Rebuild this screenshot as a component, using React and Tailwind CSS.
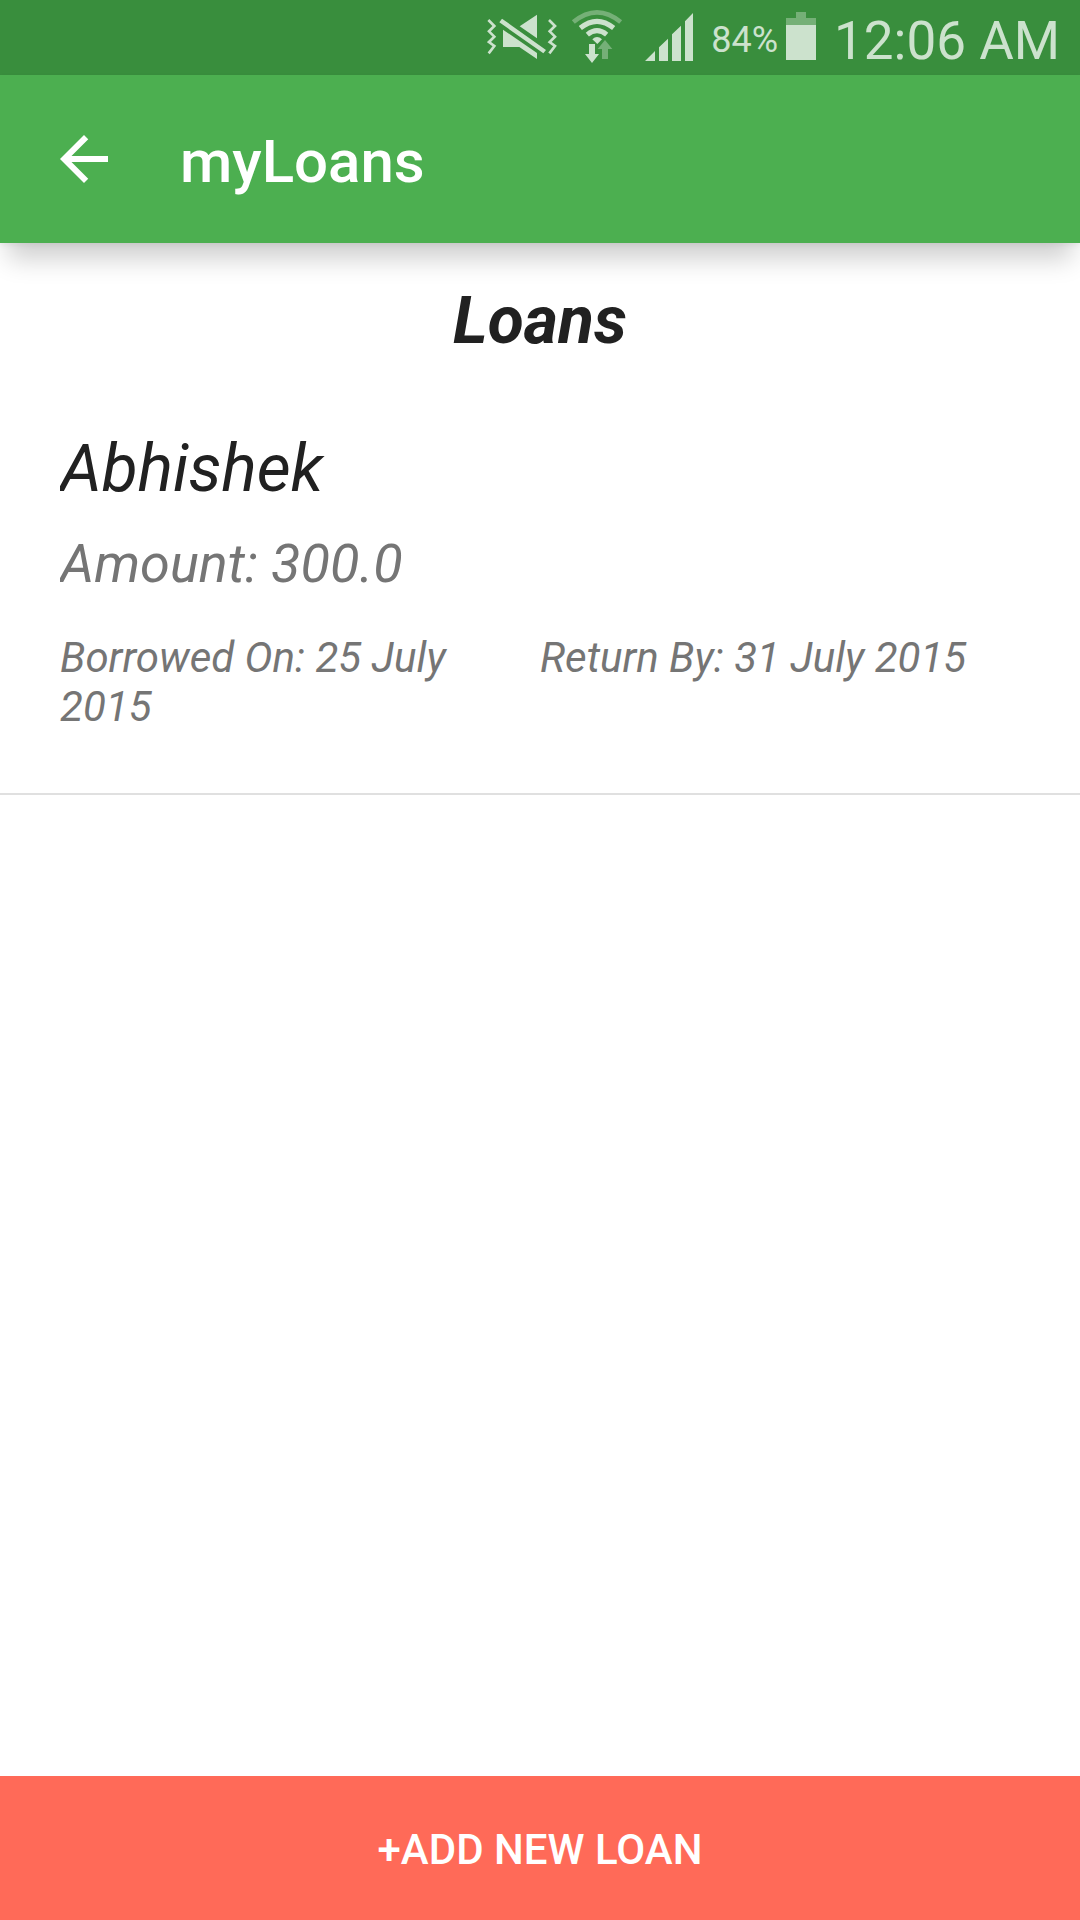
const loans = [
  {
    name: 'Abhishek',
    amount: '300.0',
    borrowed: '25 July 2015',
    due: '31 July 2015',
  },
];

function MutedIcon() {
  return (
    <svg viewBox="48 0 210 225" className="h-[75px] w-[70px]" aria-label="Vibrate">
      <g fill="none" stroke="#cce2cd" strokeWidth="8">
        <path d="M52 60 70 78 54 94 70 110 54 126 70 138 53 160" />
        <path d="M234 60 252 78 236 94 252 110 236 126 252 138 235 160" />
      </g>
      <path fill="#cce2cd" d="M198 44V115L146 79ZM96 89 198 159V177L145 141H96ZM93 56 225 150 217 160 85 67Z" />
    </svg>
  );
}

function WifiIcon() {
  return (
    <svg viewBox="300 0 156 225" className="h-[75px] w-[52px]" aria-label="Wi-Fi">
      <g fill="none" stroke="#cce2cd">
        <path stroke="#75b077" strokeWidth="14" d="M307 66Q378 8 449 66" />
        <path strokeWidth="15" d="M328 84Q378 44 428 84" />
        <path strokeWidth="15" d="M349 104Q378 80 407 104" />
      </g>
      <path fill="#cce2cd" d="M364 118Q378 104 393 118L379 132Z" />
      <path fill="#cce2cd" d="M354 132H372V162H384L363 189 342 162H354Z" />
      <path fill="#75b077" d="M402 120 424 147H411V177H393V147H380Z" />
    </svg>
  );
}

function SignalIcon() {
  return (
    <svg viewBox="522 0 144 225" className="h-[75px] w-12" aria-label="Signal strength">
      <path fill="#cce2cd" d="M552 153V183H522ZM564 142 591 116V183H564ZM603 103 630 77V183H603ZM642 64 666 39V183H642Z" />
    </svg>
  );
}

function BatteryIcon() {
  return (
    <svg viewBox="285 0 90 225" className="h-[75px] w-[30px]" aria-label="Battery">
      <path fill="#75b077" d="M315 36H345V54H375V75H285V54H315Z" />
      <path fill="#cce2cd" d="M285 75H375V180H285Z" />
    </svg>
  );
}

function StatusBar() {
  return (
    <div className="flex h-[75px] items-center justify-end bg-[#398e3d] pr-5 text-[#cce2cd]">
      <MutedIcon />
      <div className="ml-[14px]"><WifiIcon /></div>
      <div className="ml-[22px]"><SignalIcon /></div>
      <span className="ml-[18px] pt-1 text-[36px] leading-[42px]">84%</span>
      <div className="ml-2"><BatteryIcon /></div>
      <span className="ml-[18px] pt-[6px] text-[53px] leading-[64px]">12:06 AM</span>
    </div>
  );
}

function Toolbar() {
  return (
    <header className="flex h-[168px] items-center bg-[#4caf50] pt-[6px] pl-[60px] text-white shadow-[0_24px_24px_-8px_rgba(0,0,0,0.19),0_2px_5px_rgba(0,0,0,0.06)]">
      <button type="button" aria-label="Back" className="pb-[6px]">
        <svg viewBox="4 4 16 16" className="size-12" fill="currentColor">
          <path d="M20 11H7.83l5.59-5.59L12 4l-8 8 8 8 1.41-1.41L7.83 13H20v-2z" />
        </svg>
      </button>
      <h1 className="ml-[72px] text-[60px] leading-[70px] font-medium">myLoans</h1>
    </header>
  );
}

function Loan({ loan }) {
  return (
    <li className="border-b-2 border-[#e0e0e0] px-[60px] pb-[62px] text-[#757575]">
      <h3 className="overflow-hidden text-[66px] leading-[78px] text-[#212121]">{loan.name}</h3>
      <p className="mt-6 overflow-hidden text-[54px] leading-[64px]">{`Amount: ${loan.amount}`}</p>
      <div className="mt-[37px] grid grid-cols-2 text-[42px] leading-[49px]">
        <p className="pr-9">{`Borrowed On: ${loan.borrowed}`}</p>
        <p>{`Return By: ${loan.due}`}</p>
      </div>
    </li>
  );
}

export default function App() {
  return (
    <div className="flex min-h-screen flex-col bg-white font-['Roboto',sans-serif]">
      <StatusBar />
      <Toolbar />
      <main className="flex-1 pt-[39px] italic">
        <h2 className="mb-[70px] text-center text-[66px] leading-[78px] font-bold text-[#212121]">Loans</h2>
        <ul>
          {loans.map((loan) => (
            <Loan key={loan.name} loan={loan} />
          ))}
        </ul>
      </main>
      <button type="button" className="h-36 w-full bg-[#ff6a58] pt-[2px] text-[42px] leading-[49px] font-medium text-white">
        +ADD NEW LOAN
      </button>
    </div>
  );
}
